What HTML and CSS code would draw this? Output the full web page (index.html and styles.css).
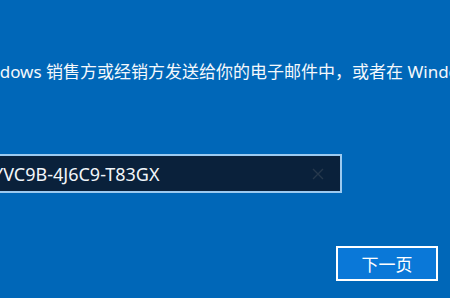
FILE: index.html
```html
<!DOCTYPE html>
<html>
<head>
  <meta charset="utf-8">
  <title>输入产品密钥</title>
  <link rel="stylesheet" href="styles.css">
</head>
<body>
  <div class="page">
    <p class="desc"><span class="cut">Win</span>dows 销售方或经销方发送给你的电子邮件中，或者在 Windows DVD 所在的包装盒上。</p>
    <div class="key-row">
      <div class="key-box">
        <span class="key-text">YVC9B-4J6C9-T83GX</span>
        <svg class="clear" width="12" height="12" viewBox="0 0 12 12">
          <path d="M1 1 L11 11 M11 1 L1 11" stroke="#26384c" stroke-width="1.4" fill="none"/>
        </svg>
      </div>
    </div>
    <div class="actions">
      <button class="next">下一页</button>
    </div>
  </div>
</body>
</html>
```

FILE: styles.css
```css
html, body {
  margin: 0;
  padding: 0;
}

body {
  width: 450px;
  height: 298px;
  overflow: hidden;
  background-color: #0067b8;
  font-family: "Noto Sans", "Noto Sans CJK SC", sans-serif;
  color: #ffffff;
}

.page {
  padding-top: 60px;
}

.desc {
  margin: 0;
  font-size: 17px;
  line-height: 24px;
  white-space: nowrap;
  overflow: hidden;
  color: #f4f8fc;
}

.cut {
  display: inline-block;
  margin-left: -31px;
}

.key-row {
  margin-top: 70px;
}

.key-box {
  display: flex;
  align-items: center;
  box-sizing: border-box;
  margin-left: -20px;
  width: 362px;
  height: 39px;
  padding: 0 12px 0 11px;
  background-color: #0a213b;
  border: 2px solid #9ccaf0;
}

.key-text {
  flex: 1;
  font-size: 18px;
  color: #f2f6fa;
  white-space: nowrap;
}

.clear {
  margin-right: 4px;
}

.actions {
  display: flex;
  justify-content: flex-end;
  margin-top: 53px;
  padding-right: 12px;
}

.next {
  box-sizing: border-box;
  width: 102px;
  height: 35px;
  background-color: #0a78d8;
  border: 2px solid #ffffff;
  color: #ffffff;
  font-family: "Noto Sans CJK SC", sans-serif;
  font-size: 17px;
  padding: 0;
}
```
